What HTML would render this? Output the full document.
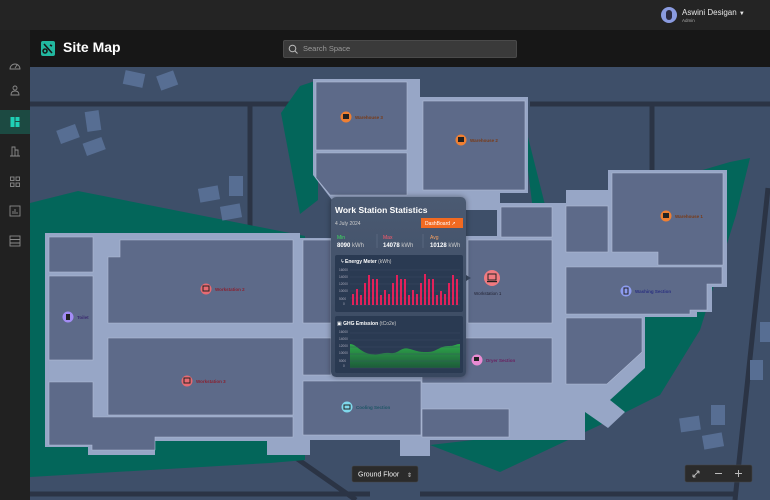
<!DOCTYPE html>
<html><head><meta charset="utf-8"><style>
*{margin:0;padding:0;box-sizing:border-box}
body{width:770px;height:500px;overflow:hidden;background:#232323;font-family:"Liberation Sans",sans-serif;position:relative}
.abs{position:absolute}
</style></head><body>
<div class="abs" style="left:0;top:0;width:770px;height:30px;background:#242424"></div>
<div class="abs" style="left:0;top:30px;width:30px;height:470px;background:#212121"></div>
<div class="abs" style="left:30px;top:30px;width:740px;height:37px;background:#171717"></div>
<div class="abs" style="left:661px;top:7px;width:16px;height:16px;border-radius:50%;background:#8a9be0"></div>
<div class="abs" style="left:666px;top:10px;width:6px;height:10px;border-radius:3px;background:#2a2a40"></div>
<div class="abs" style="left:682px;top:8px;color:#e6e6e6;font-size:8px">Aswini Desigan <span style="font-size:6px">▼</span></div>
<div class="abs" style="left:682px;top:18px;color:#aaa;font-size:4.5px">Admin</div>
<svg class="abs" style="left:41px;top:41px" width="14" height="15" viewBox="0 0 14 15"><rect width="14" height="15" rx="2" fill="#22b8a0"/><path d="M3 3L11 12M4 8a2 2 0 1 0 0.1 0M9 4l2 1" stroke="#171717" stroke-width="1.6" fill="none"/></svg>
<div class="abs" style="left:63px;top:39px;color:#fff;font-size:14px;font-weight:bold">Site Map</div>
<div class="abs" style="left:283px;top:40px;width:234px;height:18px;background:#3a3a3a;border:1px solid #4a4a4a;border-radius:2px"></div>
<svg class="abs" style="left:288px;top:44px" width="10" height="10"><circle cx="4.5" cy="4.5" r="3.3" stroke="#bbb" stroke-width="1" fill="none"/><path d="M7 7l2.5 2.5" stroke="#bbb"/></svg>
<div class="abs" style="left:303px;top:44px;color:#999;font-size:7.5px">Search Space</div>
<div class="abs" style="left:0;top:110px;width:30px;height:24px;background:#1c4a42"></div>
<svg class="abs" style="left:0;top:0" width="30" height="260" fill="none" stroke="#8a8a8a" stroke-width="0.9">
<path d="M10 69a5 5 0 1 1 10 0z M15 68l2-3"/>
<circle cx="15" cy="88" r="2"/><path d="M11 95h8c0-3-2-4-4-4s-4 1-4 4z"/>
<rect x="10.5" y="117" width="4" height="10" fill="#1fcfb5" stroke="none"/><rect x="15.5" y="117" width="4" height="4" fill="#1fcfb5" stroke="none"/><rect x="15.5" y="122" width="4" height="5" fill="#1fcfb5" stroke="none"/>
<path d="M10 156h10M12 156v-9h3v9M15 150h3v6"/>
<rect x="10.5" y="177" width="3.5" height="3.5"/><rect x="16" y="177" width="3.5" height="3.5"/><rect x="10.5" y="183" width="3.5" height="3.5"/><rect x="16" y="183" width="3.5" height="3.5"/>
<rect x="10" y="206" width="10" height="10"/><path d="M13 214v-3M15 214v-5M17 214v-2"/>
<rect x="10" y="236" width="10" height="10"/><path d="M10 239.5h10M10 243h10"/>
</svg>
<svg class="abs" style="left:0;top:0" width="770" height="500">
<rect x="30" y="67" width="740" height="433" fill="#3e4f69"/>
<g stroke="#2b3445" stroke-width="5" fill="none">
<path d="M30 104H300M530 104H770M250 104V240M652 104V172M768 188L735 500M296 458L356 500M30 494H370M420 494H735"/>
</g>
<g fill="#03665a">
<polygon points="30,203 78,191 305,236 305,460 270,463 30,477"/>
<polygon points="281,113 300,86 318,80 318,200 300,214"/>
<polygon points="520,105 545,205 600,200 730,162 750,158 736,215 700,330 660,395 600,425 500,472 430,445 560,430"/>
</g>
<g fill="#576e93">
<rect x="124" y="72" width="20" height="14" transform="rotate(12 134 79)"/><rect x="158" y="73" width="18" height="15" transform="rotate(-20 167 80)"/>
<rect x="58" y="127" width="20" height="14" transform="rotate(-20 68 134)"/><rect x="86" y="111" width="14" height="20" transform="rotate(-8 93 121)"/><rect x="84" y="140" width="20" height="13" transform="rotate(-20 94 146)"/>
<rect x="199" y="187" width="20" height="14" transform="rotate(-10 209 194)"/><rect x="229" y="176" width="14" height="20"/><rect x="221" y="205" width="20" height="14" transform="rotate(-10 231 212)"/>
<rect x="760" y="322" width="10" height="20"/><rect x="750" y="360" width="13" height="20"/>
<rect x="680" y="417" width="20" height="14" transform="rotate(-8 690 424)"/><rect x="711" y="405" width="14" height="20"/><rect x="703" y="434" width="20" height="14" transform="rotate(-10 713 441)"/>
</g>
<g fill="#97a6c6">
<polygon points="45,233 300,233 300,238 332,238 332,200 313,175 313,79 420,79 420,97 528,97 528,193 500,193 500,203 566,203 566,190 608,190 608,170 727,170 727,287 712,287 712,312 697,312 697,317 645,317 645,368 610,400 625,412 608,428 585,412 585,440 430,440 430,456 400,456 400,440 310,440 310,455 267,455 267,441 155,441 155,455 88,455 88,447 45,447"/>
</g>
<g fill="#5d6a89" stroke="#b0bcd6" stroke-width="0.6">
<rect x="316" y="82" width="91" height="68"/>
<polygon points="316,153 407,153 407,195 330,195 316,178"/>
<rect x="423" y="101" width="102" height="89"/>
<rect x="49" y="237" width="44" height="35"/>
<rect x="49" y="276" width="44" height="84"/>
<polygon points="49,382 93,382 93,417 293,417 293,437 155,437 155,450 92,450 92,445 49,445"/>
<polygon points="120,240 293,240 293,323 108,323 108,257 120,257"/>
<rect x="108" y="338" width="185" height="77"/>
<rect x="303" y="240" width="28" height="83"/>
<rect x="303" y="338" width="28" height="37"/>
<rect x="303" y="381" width="118" height="54"/>
<rect x="468" y="240" width="84" height="83"/>
<rect x="501" y="207" width="51" height="30"/>
<rect x="422" y="338" width="130" height="45"/>
<rect x="422" y="409" width="87" height="28"/>
<rect x="566" y="206" width="42" height="46"/>
<polygon points="612,173 723,173 723,265 658,265 658,252 612,252"/>
<polygon points="566,267 722,267 722,284 707,284 707,310 690,310 690,314 566,314"/>
<polygon points="566,318 642,318 642,352 607,384 566,384"/>
</g>
<rect x="466" y="210" width="31" height="26" fill="#3e4f69"/>
<g font-size="4.5" font-weight="bold">
<circle cx="346" cy="117" r="5.5" fill="#ef7f32"/><text x="355" y="119" fill="#7a3a15">Warehouse 3</text>
<circle cx="461" cy="140" r="5.5" fill="#ef7f32"/><text x="470" y="142" fill="#7a3a15">Warehouse 2</text>
<circle cx="666" cy="216" r="5.5" fill="#ef7f32"/><text x="675" y="218" fill="#7a3a15">Warehouse 1</text>
<circle cx="206" cy="289" r="5.5" fill="#e86a72"/><text x="215" y="291" fill="#8a2030">Workstation 2</text>
<circle cx="187" cy="381" r="5.5" fill="#e86a72"/><text x="196" y="383" fill="#8a2030">Workstation 3</text>
<circle cx="68" cy="317" r="5.5" fill="#a38cf5"/><text x="77" y="319" fill="#3a2a70">Toilet</text>
<circle cx="492" cy="278" r="8" fill="#f07a80"/><text x="474" y="295" fill="#223" font-weight="normal">Workstation 1</text>
<circle cx="626" cy="291" r="5.5" fill="#8d9cf0"/><text x="635" y="293" fill="#2a3080">Washing Section</text>
<circle cx="477" cy="360" r="5.5" fill="#e98ad2"/><text x="486" y="362" fill="#6a2060">Dryer Section</text>
<circle cx="347" cy="407" r="5.5" fill="#7fd8ec"/><text x="356" y="409" fill="#1e5566">Cooling Section</text>
</g>
<g fill="#222">
<rect x="343" y="114" width="6" height="5"/><rect x="458" y="137" width="6" height="5"/><rect x="663" y="213" width="6" height="5"/>
<rect x="203" y="286" width="6" height="5" fill="none" stroke="#222"/><rect x="184" y="378" width="6" height="5" fill="none" stroke="#222"/>
<rect x="488" y="274" width="8" height="6" fill="none" stroke="#222"/><rect x="487" y="281" width="10" height="1.2"/>
<rect x="66" y="314" width="4" height="6"/><rect x="624" y="288" width="4" height="6" fill="none" stroke="#222"/><rect x="474" y="357" width="5" height="4"/><rect x="344" y="405" width="6" height="4" fill="none" stroke="#222"/>
</g>
<rect x="352" y="466" width="66" height="16" rx="2" fill="#2b2b2b" stroke="#444" stroke-width="0.6"/>
<text x="358" y="476.5" fill="#eee" font-size="7">Ground Floor</text><text x="407" y="477" fill="#ccc" font-size="6">⇕</text>
<rect x="685" y="465" width="67" height="17" rx="2" fill="#2b2b2b" stroke="#444" stroke-width="0.6"/>
<path d="M693 477l6-6M693 477v-2.5M693 477h2.5M699 471h-2.5M699 471v2.5M715 473.5h7M735 473.5h7M738.5 470v7" stroke="#bbb" stroke-width="1" fill="none"/>
<path d="M466 275l5 3-5 3z" fill="#3b4a63"/>
</svg>
<div class="abs" style="left:331px;top:197px;width:135px;height:180px;border-radius:5px;background:linear-gradient(#4b5a72,#38475f);box-shadow:0 0 6px rgba(0,0,0,.4)"></div>
<svg class="abs" style="left:0;top:0" width="770" height="500">
<text x="335" y="213" fill="#fff" font-size="8.5" font-weight="bold">Work Station Statistics</text>
<text x="335" y="225" fill="#ccc" font-size="5">4 July 2024</text>
<rect x="421" y="218" width="42" height="10" fill="#f26a21"/><text x="425" y="225" fill="#fff" font-size="5">DashBoard ↗</text>
<text x="337" y="239" fill="#3ddc60" font-size="5">Min</text><text x="337" y="247" fill="#fff" font-size="6" font-weight="bold">8090 <tspan font-weight="normal" fill="#ccc">kWh</tspan></text>
<text x="383" y="239" fill="#ff5a6a" font-size="5">Max</text><text x="383" y="247" fill="#fff" font-size="6" font-weight="bold">14078 <tspan font-weight="normal" fill="#ccc">kWh</tspan></text>
<text x="430" y="239" fill="#f7a060" font-size="5">Avg</text><text x="430" y="247" fill="#fff" font-size="6" font-weight="bold">10128 <tspan font-weight="normal" fill="#ccc">kWh</tspan></text>
<path d="M377 234v14M423 234v14" stroke="#6a7890" stroke-width="0.5"/>
<rect x="335" y="255" width="128" height="57" rx="2" fill="#2a3a52"/>
<text x="341" y="263" fill="#fff" font-size="5">ϟ <tspan font-weight="bold">Energy Meter</tspan> <tspan fill="#ccc">(kWh)</tspan></text>
<g fill="#aab" font-size="3.2"><text x="339" y="271">16000</text><text x="339" y="278">14000</text><text x="339" y="285">12000</text><text x="339" y="292">10000</text><text x="339" y="300">5000</text><text x="343" y="305">0</text></g>
<g stroke="#3c4c66" stroke-width="0.4"><path d="M350 270H460M350 277H460M350 284H460M350 291H460M350 298H460M350 305H460"/></g>
<rect x="335" y="316" width="128" height="57" rx="2" fill="#2a3a52"/>
<text x="337" y="325" fill="#fff" font-size="5">▣ <tspan font-weight="bold">GHG Emission</tspan> <tspan fill="#ccc">(tCo2e)</tspan></text>
<g fill="#aab" font-size="3.2"><text x="339" y="333">16000</text><text x="339" y="340">14000</text><text x="339" y="347">12000</text><text x="339" y="354">10000</text><text x="339" y="362">5000</text><text x="343" y="367">0</text></g>
<defs><linearGradient id="g" x1="0" y1="0" x2="0" y2="1"><stop offset="0" stop-color="#2ea84a"/><stop offset="1" stop-color="#1d5a3a"/></linearGradient></defs>
<path d="M350 344C356 344 360 352 370 354S380 352 390 353S400 346 410 349S420 352 428 352S440 346 448 346S455 344 460 344V368H350Z" fill="url(#g)"/>
<g stroke="#3c4c66" stroke-width="0.4"><path d="M350 333H460M350 340H460M350 347H460M350 354H460M350 361H460M350 368H460"/></g>
<g fill="#e2215a">
<rect x="352" y="294" width="2" height="11"/><rect x="356" y="289" width="2" height="16"/><rect x="360" y="295" width="2" height="10"/><rect x="364" y="283" width="2" height="22"/><rect x="368" y="275" width="2" height="30"/><rect x="372" y="279" width="2" height="26"/><rect x="376" y="279" width="2" height="26"/><rect x="380" y="295" width="2" height="10"/><rect x="384" y="290" width="2" height="15"/><rect x="388" y="294" width="2" height="11"/><rect x="392" y="283" width="2" height="22"/><rect x="396" y="275" width="2" height="30"/><rect x="400" y="279" width="2" height="26"/><rect x="404" y="279" width="2" height="26"/><rect x="408" y="295" width="2" height="10"/><rect x="412" y="290" width="2" height="15"/><rect x="416" y="294" width="2" height="11"/><rect x="420" y="283" width="2" height="22"/><rect x="424" y="274" width="2" height="31"/><rect x="428" y="279" width="2" height="26"/><rect x="432" y="279" width="2" height="26"/><rect x="436" y="295" width="2" height="10"/><rect x="440" y="291" width="2" height="14"/><rect x="444" y="294" width="2" height="11"/><rect x="448" y="283" width="2" height="22"/><rect x="452" y="275" width="2" height="30"/><rect x="456" y="279" width="2" height="26"/>
</g></svg>
</body></html>
